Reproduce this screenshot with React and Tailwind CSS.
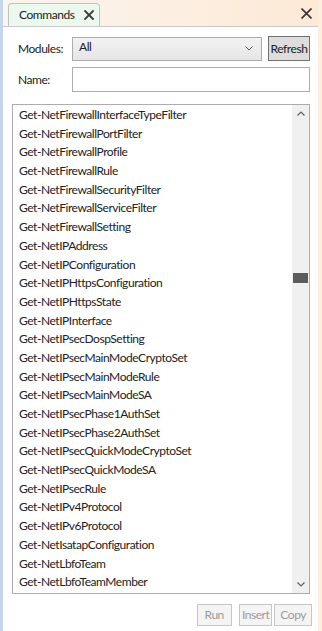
import React from 'react';

const commands = [
  'Get-NetFirewallInterfaceTypeFilter',
  'Get-NetFirewallPortFilter',
  'Get-NetFirewallProfile',
  'Get-NetFirewallRule',
  'Get-NetFirewallSecurityFilter',
  'Get-NetFirewallServiceFilter',
  'Get-NetFirewallSetting',
  'Get-NetIPAddress',
  'Get-NetIPConfiguration',
  'Get-NetIPHttpsConfiguration',
  'Get-NetIPHttpsState',
  'Get-NetIPInterface',
  'Get-NetIPsecDospSetting',
  'Get-NetIPsecMainModeCryptoSet',
  'Get-NetIPsecMainModeRule',
  'Get-NetIPsecMainModeSA',
  'Get-NetIPsecPhase1AuthSet',
  'Get-NetIPsecPhase2AuthSet',
  'Get-NetIPsecQuickModeCryptoSet',
  'Get-NetIPsecQuickModeSA',
  'Get-NetIPsecRule',
  'Get-NetIPv4Protocol',
  'Get-NetIPv6Protocol',
  'Get-NetIsatapConfiguration',
  'Get-NetLbfoTeam',
  'Get-NetLbfoTeamMember',
];

const Cross = ({ size = 10, stroke = 1.8 }) => (
  <svg width={size} height={size} viewBox="0 0 10 10">
    <path d="M1 1L9 9M9 1L1 9" stroke="#3a3a3a" strokeWidth={stroke} strokeLinecap="square" />
  </svg>
);

export default function App() {
  return (
    <div
      className="w-[322px] h-[631px] flex bg-white text-[12px] tracking-[-0.45px] text-[#222] overflow-hidden"
      style={{ fontFamily: 'Lato, "Open Sans", sans-serif' }}
    >
      {/* left blue frame */}
      <div className="w-[3px] bg-[#c7d5e8]" />

      <div className="flex-1 flex flex-col">
        {/* tab strip */}
        <div className="h-[27px] flex items-end justify-between border-b border-[#c9c9c9] bg-gradient-to-r from-[#fbf5ef] to-[#fde9d6]">
          <div className="ml-[5px] h-[23px] w-[92px] flex items-center gap-[10px] pl-[10px] rounded-t-[4px] border border-b-0 border-[#b7c7bb] bg-[#ebf9ef]">
            <span>Commands</span>
            <Cross size={10} />
          </div>
          <div className="mb-[7px] mr-[6px]">
            <Cross size={11} stroke={1.6} />
          </div>
        </div>

        {/* form */}
        <div className="flex-1 flex flex-col pl-[9px] pr-[8px]">
          <div className="flex items-center mt-[9px] h-[25px]">
            <span className="w-[60px] pl-[6px]">Modules:</span>
            <div className="w-[190px] h-[24px] flex items-center justify-between pl-[6px] pr-[8px] border border-[#acacac] bg-gradient-to-b from-[#f2f2f2] to-[#e6e6e6]">
              <span className="-mt-[3px]">All</span>
              <svg width="8" height="5" viewBox="0 0 8 5">
                <path d="M0.5 0.5L4 4L7.5 0.5" stroke="#555" strokeWidth="1" fill="none" />
              </svg>
            </div>
            <div className="ml-[6px] w-[42px] h-[25px] flex items-center justify-center border border-[#707070] bg-[#dddddd]">
              Refresh
            </div>
          </div>

          <div className="flex items-center mt-[6px] h-[25px]">
            <span className="w-[60px] pl-[6px]">Name:</span>
            <div className="flex-1 h-[25px] border border-[#abadb3] bg-white" />
          </div>

          {/* command list */}
          <div className="mt-[12px] h-[490px] flex border border-[#acacac] bg-white">
            <div className="flex-1 pt-[1px] pl-[6px]">
              {commands.map((c) => (
                <div key={c} className="h-[18.7px] leading-[18.7px] whitespace-nowrap">
                  {c}
                </div>
              ))}
            </div>
            <div className="w-[17px] flex flex-col bg-[#f0f0f0]">
              <div className="h-[17px] flex items-center justify-center">
                <svg width="8" height="5" viewBox="0 0 8 5">
                  <path d="M0.5 4.5L4 1L7.5 4.5" stroke="#606060" strokeWidth="1.2" fill="none" />
                </svg>
              </div>
              <div className="flex-1 flex flex-col">
                <div className="h-[151px]" />
                <div className="h-[10px] mx-[1px] bg-[#5c5c5c]" />
              </div>
              <div className="h-[17px] flex items-center justify-center">
                <svg width="8" height="5" viewBox="0 0 8 5">
                  <path d="M0.5 0.5L4 4L7.5 0.5" stroke="#606060" strokeWidth="1.2" fill="none" />
                </svg>
              </div>
            </div>
          </div>

          {/* buttons */}
          <div className="mt-[10px] -mr-[2px] flex justify-end text-[#9a9a9a]">
            <div className="h-[22px] px-[7px] flex items-center border border-[#c6c6c6] bg-[#f4f4f4]">Run</div>
            <div className="ml-[7px] h-[22px] px-[2px] flex items-center border border-[#c6c6c6] bg-[#f4f4f4]">Insert</div>
            <div className="ml-[2px] h-[22px] px-[5px] flex items-center border border-[#c6c6c6] bg-[#f4f4f4]">Copy</div>
          </div>
        </div>
      </div>

      {/* right peach frame */}
      <div className="w-[4px] bg-[#fdeedd]" />
    </div>
  );
}
